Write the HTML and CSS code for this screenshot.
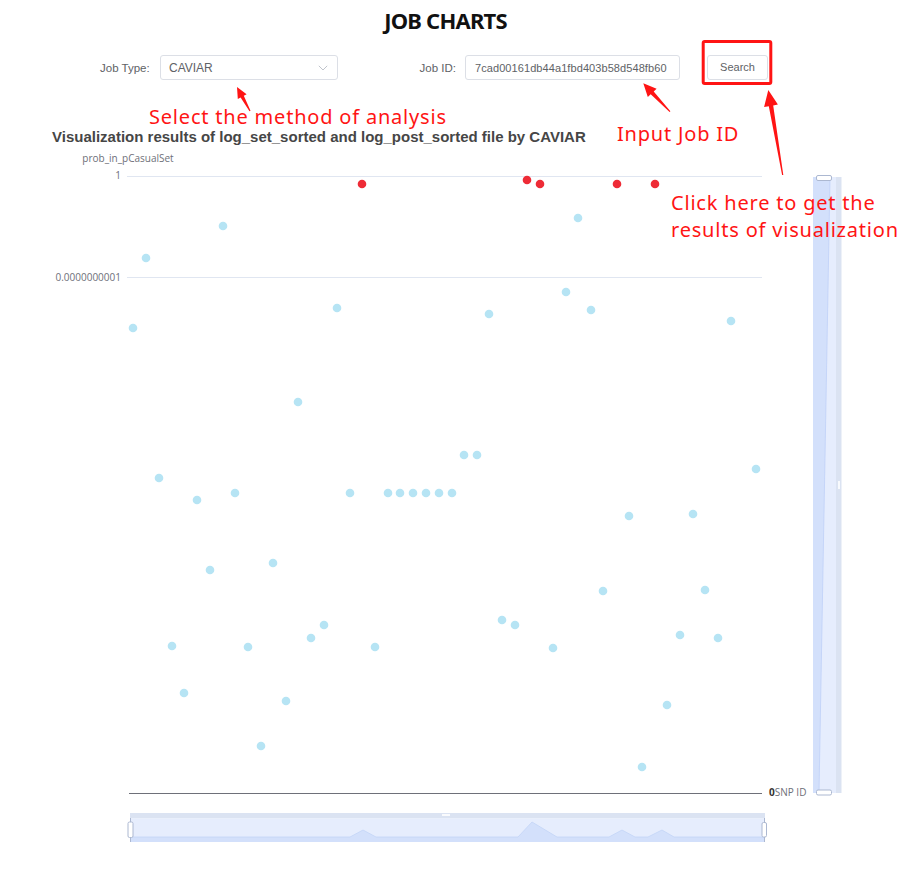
FILE: index.html
```html
<!DOCTYPE html>
<html lang="en">
<head>
<meta charset="utf-8">
<title>Job Charts</title>
<link rel="stylesheet" href="styles.css">
</head>
<body>
<div class="page">
  <h1 class="title">JOB CHARTS</h1>
  <div class="query">
    <label class="field-label type-label">Job Type:</label>
    <div class="select">
      <span class="select-value">CAVIAR</span>
      <svg class="chevron" width="10" height="6" viewBox="0 0 10 6"><path d="M0.8 0.8 L5 5 L9.2 0.8" fill="none" stroke="#c0c4cc" stroke-width="1"/></svg>
    </div>
    <label class="field-label id-label">Job ID:</label>
    <div class="input">7cad00161db44a1fbd403b58d548fb60</div>
    <button class="btn" type="button">Search</button>
  </div>
  <h2 class="chart-title">Visualization results of log_set_sorted and log_post_sorted file by CAVIAR</h2>
  <svg class="chart" width="903" height="703" viewBox="0 147 903 703">
    <g class="axis-text">
      <text x="128" y="162" text-anchor="middle">prob_in_pCasualSet</text>
      <text x="121" y="179" text-anchor="end">1</text>
      <text x="121" y="281" text-anchor="end">0.0000000001</text>
      <text x="769" y="796"><tspan class="tick-zero">0</tspan>SNP ID</text>
    </g>
    <line x1="127" y1="176.5" x2="762" y2="176.5" stroke="#e0e6f1"/>
    <line x1="127" y1="277.5" x2="762" y2="277.5" stroke="#e0e6f1"/>
    <line x1="129" y1="793.5" x2="762" y2="793.5" stroke="#6e7079"/>
    <g fill="#b6e4f4">
      <circle cx="133" cy="328" r="4.3"/><circle cx="146" cy="258" r="4.3"/><circle cx="159" cy="478" r="4.3"/>
      <circle cx="172" cy="646" r="4.3"/><circle cx="184" cy="693" r="4.3"/><circle cx="197" cy="500" r="4.3"/>
      <circle cx="210" cy="570" r="4.3"/><circle cx="223" cy="226" r="4.3"/><circle cx="235" cy="493" r="4.3"/>
      <circle cx="248" cy="647" r="4.3"/><circle cx="261" cy="746" r="4.3"/><circle cx="273" cy="563" r="4.3"/>
      <circle cx="286" cy="701" r="4.3"/><circle cx="298" cy="402" r="4.3"/><circle cx="311" cy="638" r="4.3"/>
      <circle cx="324" cy="625" r="4.3"/><circle cx="337" cy="308" r="4.3"/><circle cx="350" cy="493" r="4.3"/>
      <circle cx="375" cy="647" r="4.3"/><circle cx="388" cy="493" r="4.3"/><circle cx="400" cy="493" r="4.3"/>
      <circle cx="413" cy="493" r="4.3"/><circle cx="426" cy="493" r="4.3"/><circle cx="439" cy="493" r="4.3"/>
      <circle cx="452" cy="493" r="4.3"/><circle cx="464" cy="455" r="4.3"/><circle cx="477" cy="455" r="4.3"/>
      <circle cx="489" cy="314" r="4.3"/><circle cx="502" cy="620" r="4.3"/><circle cx="515" cy="625" r="4.3"/>
      <circle cx="553" cy="648" r="4.3"/><circle cx="566" cy="292" r="4.3"/><circle cx="578" cy="218" r="4.3"/>
      <circle cx="591" cy="310" r="4.3"/><circle cx="603" cy="591" r="4.3"/><circle cx="629" cy="516" r="4.3"/>
      <circle cx="642" cy="767" r="4.3"/><circle cx="667" cy="705" r="4.3"/><circle cx="680" cy="635" r="4.3"/>
      <circle cx="693" cy="514" r="4.3"/><circle cx="705" cy="590" r="4.3"/><circle cx="718" cy="638" r="4.3"/>
      <circle cx="731" cy="321" r="4.3"/><circle cx="756" cy="469" r="4.3"/>
    </g>
    <g fill="#ee2b36">
      <circle cx="362" cy="184" r="4.3"/><circle cx="527" cy="180" r="4.3"/><circle cx="540" cy="184" r="4.3"/>
      <circle cx="617" cy="184" r="4.3"/><circle cx="655" cy="184" r="4.3"/>
    </g>
    <!-- vertical data zoom -->
    <rect x="813" y="177" width="23" height="616" fill="#e6edfd"/>
    <polygon points="813,177 830,177 819,793 813,793" fill="#d3e0fb"/>
    <line x1="830" y1="177" x2="819" y2="793" stroke="#bfd1f7" stroke-width="0.8"/>
    <rect x="836" y="177" width="5.5" height="616" fill="#dbe3f2"/>
    <rect x="838" y="481" width="2" height="8" fill="#ffffff" opacity="0.8"/>
    <rect x="816.5" y="175.5" width="15" height="5" rx="1.5" fill="#ffffff" stroke="#acb8d1"/>
    <rect x="816.5" y="790" width="15" height="5" rx="1.5" fill="#ffffff" stroke="#acb8d1"/>
    <!-- horizontal data zoom -->
    <rect x="130" y="813" width="635" height="5.5" fill="#dbe3f2"/>
    <rect x="130" y="818.5" width="635" height="23.5" fill="#e6edfd"/>
    <polygon points="130,837 350,837 363,830 376,837 518,837 532,822 557,837 609,837 622,830 635,837 648,837 662,830 674,837 765,837 765,842 130,842" fill="#d3e0fb"/>
    <polyline points="130,837 350,837 363,830 376,837 518,837 532,822 557,837 609,837 622,830 635,837 648,837 662,830 674,837 765,837" fill="none" stroke="#c3d4f6" stroke-width="0.8"/>
    <rect x="442" y="814" width="8" height="2" fill="#ffffff" opacity="0.85"/>
    <line x1="130.5" y1="818" x2="130.5" y2="842" stroke="#acb8d1"/>
    <line x1="764.5" y1="818" x2="764.5" y2="842" stroke="#acb8d1"/>
    <rect x="128" y="822" width="5" height="15.5" rx="1.5" fill="#ffffff" stroke="#acb8d1"/>
    <rect x="762" y="822.5" width="4.5" height="14.5" rx="1.5" fill="#ffffff" stroke="#acb8d1"/>
  </svg>
  <div class="notes">
    <svg class="marks" width="903" height="870" viewBox="0 0 903 870">
      <rect x="703.2" y="41.5" width="67.6" height="42" rx="1.5" fill="none" stroke="#ff1414" stroke-width="3"/>
      <polygon fill="#ff1414" points="250.5,110.7 243.8,95.8 246.6,94.3 237,87 237.8,99.1 240.6,97.6 249.5,111.3"/>
      <polygon fill="#ff1414" points="670.4,111.3 653.7,91.4 656.6,88.7 643.3,83.3 647.8,96.9 650.7,94.2 669.6,112.1"/>
      <polygon fill="#ff1414" points="783.3,174.9 773.2,105.4 777.9,104.6 768.3,90 764.1,107 768.8,106.2 782.1,175.1"/>
    </svg>
    <p class="note note-type">Select the method of analysis</p>
    <p class="note note-id">Input Job ID</p>
    <p class="note note-search">Click here to get the<br>results of visualization</p>
  </div>
</div>
</body>
</html>
```

FILE: styles.css
```css
html, body {
  margin: 0;
  padding: 0;
  background: #ffffff;
}
.page {
  position: relative;
  width: 903px;
  height: 870px;
  overflow: hidden;
  font-family: "Liberation Sans", Arial, sans-serif;
}
.title {
  margin: 0;
  padding: 8px 12px 0 0;
  height: 24px;
  line-height: 24px;
  text-align: center;
  font-family: "Noto Sans", sans-serif;
  font-weight: 700;
  font-size: 22px;
  letter-spacing: -0.8px;
  color: #111111;
}
.query {
  display: flex;
  align-items: center;
  height: 25px;
  margin-top: 23px;
  padding-left: 100px;
}
.field-label {
  box-sizing: border-box;
  font-size: 11.5px;
  color: #606266;
  text-align: right;
  white-space: nowrap;
}
.type-label {
  width: 60px;
  padding-right: 10px;
  text-align: left;
}
.id-label {
  width: 127px;
  padding-right: 9px;
}
.select, .input {
  box-sizing: border-box;
  height: 25px;
  border: 1px solid #dcdfe6;
  border-radius: 3px;
  display: flex;
  align-items: center;
  color: #606266;
}
.select {
  width: 178px;
  padding: 0 9px 0 8px;
  justify-content: space-between;
  font-size: 12px;
}
.chevron {
  display: block;
}
.input {
  width: 215px;
  padding-left: 9px;
  font-size: 11px;
  letter-spacing: 0.08px;
}
.btn {
  box-sizing: border-box;
  width: 61px;
  height: 25px;
  margin-left: 27px;
  margin-top: -1px;
  padding: 0;
  border: 1px solid #dcdfe6;
  border-radius: 3px;
  background: #ffffff;
  font-family: "Liberation Sans", Arial, sans-serif;
  font-size: 11px;
  color: #606266;
}
.chart-title {
  margin: 48px 0 0 0;
  padding-left: 52px;
  height: 18px;
  line-height: 18px;
  font-size: 15px;
  font-weight: 700;
  color: #464646;
}
.chart {
  display: block;
  margin-top: 1px;
}
.axis-text text {
  font-family: "Open Sans", sans-serif;
  font-size: 10px;
  fill: #6e7079;
}
.axis-text .tick-zero {
  fill: #333333;
  font-weight: 700;
}
.notes {
  position: absolute;
  left: 0;
  top: 0;
  width: 903px;
  height: 870px;
  pointer-events: none;
}
.marks {
  position: absolute;
  left: 0;
  top: 0;
}
.note {
  position: absolute;
  margin: 0;
  font-family: "Noto Sans", sans-serif;
  font-size: 20px;
  letter-spacing: 0.8px;
  line-height: 27px;
  color: #ff1414;
  white-space: nowrap;
}
.note-type {
  left: 149px;
  top: 107px;
  line-height: 20px;
}
.note-id {
  left: 617px;
  top: 120px;
}
.note-search {
  left: 671px;
  top: 189px;
}
```
